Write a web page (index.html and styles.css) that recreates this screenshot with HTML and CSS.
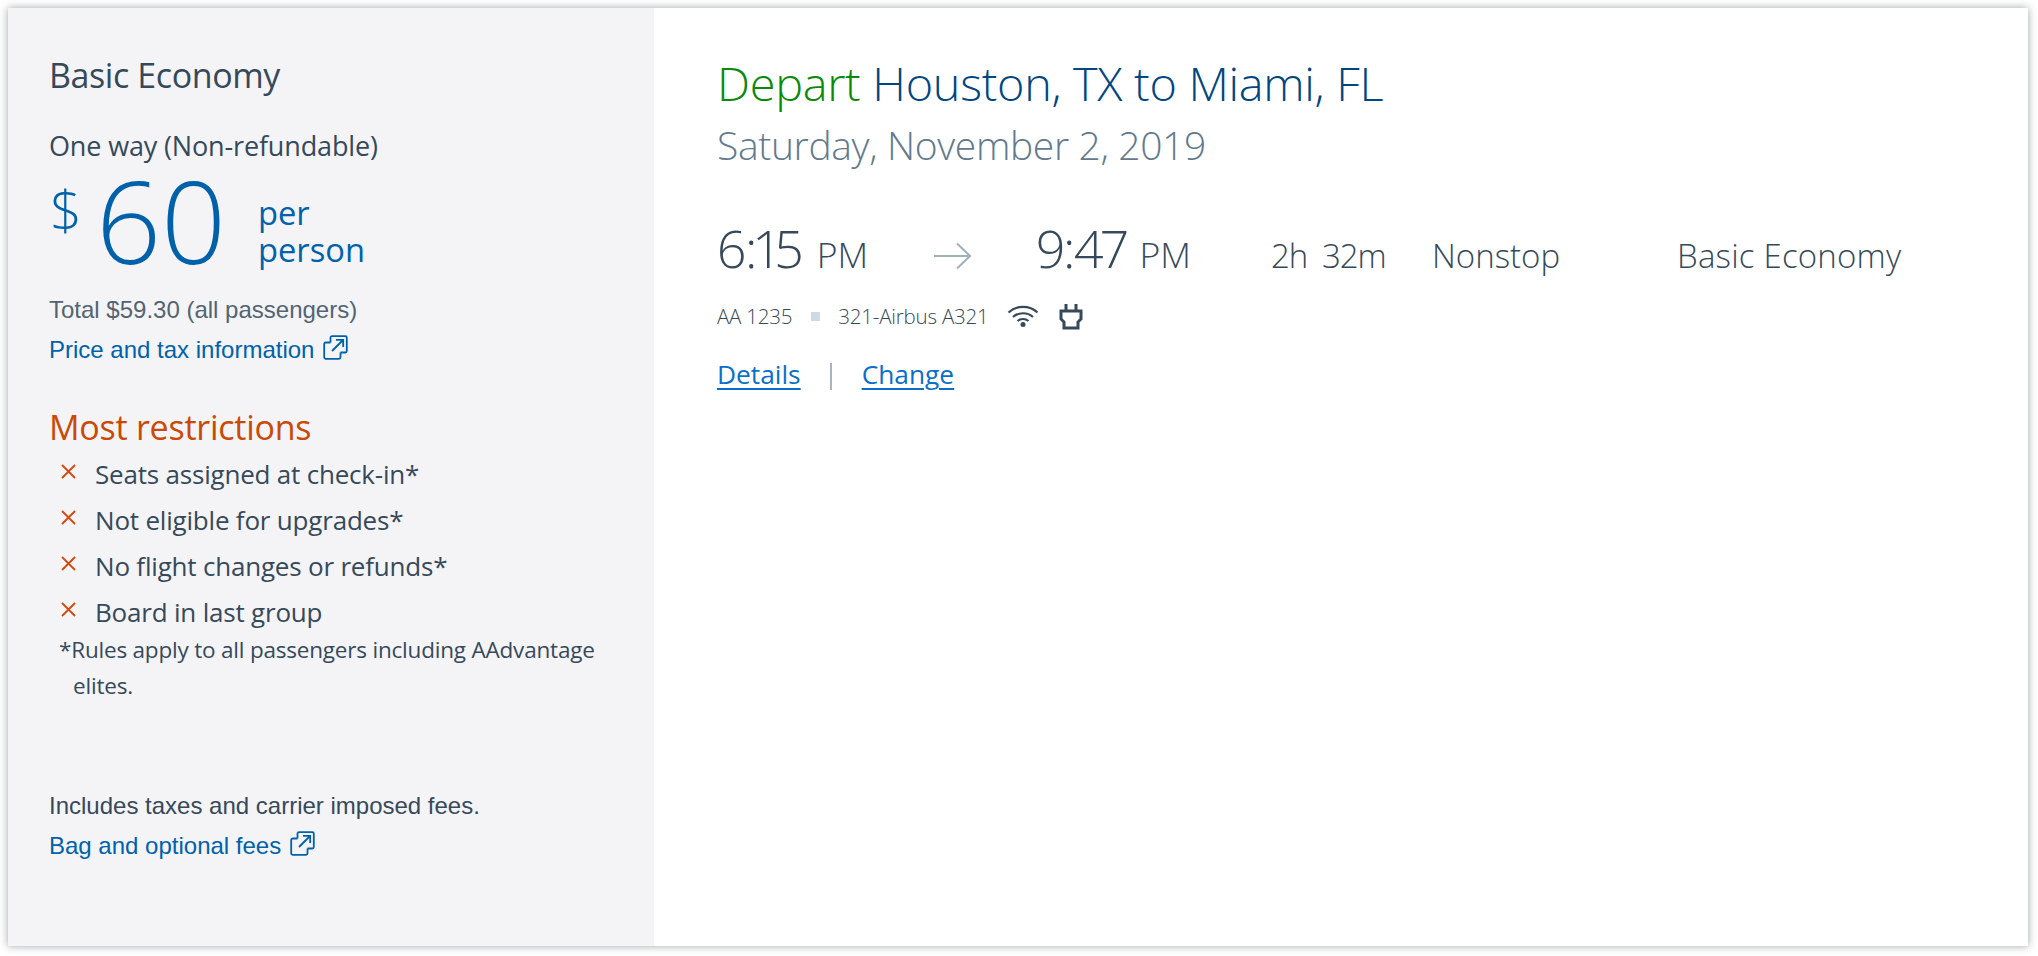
FILE: index.html
```html
<!DOCTYPE html>
<html lang="en">
<head>
<meta charset="utf-8">
<title>Basic Economy</title>
<link rel="stylesheet" href="styles.css">
</head>
<body>
<main class="card">
  <aside class="fare">
    <h2 class="fare-name">Basic Economy</h2>
    <p class="fare-type">One way (Non-refundable)</p>
    <div class="price">
      <span class="currency">$</span>
      <span class="amount">60</span>
      <span class="per">per<br>person</span>
    </div>
    <p class="total">Total $59.30 (all passengers)</p>
    <a class="ext-link" href="#">Price and tax information
      <svg class="ext-icon" viewBox="0 0 25 25" aria-hidden="true"><path d="M9 1.2h13.3a1.5 1.5 0 0 1 1.5 1.5V16a1.5 1.5 0 0 1-1.5 1.5H17.500M9 1.200a1.500 1.500 0 0 0-1.500 1.500V7.500M7.500 7.500H2.700a1.500 1.500 0 0 0-1.500 1.500v13.300a1.500 1.500 0 0 0 1.500 1.500H16a1.500 1.500 0 0 0 1.500-1.500V17.500M9 16 20 5M13 4.800h7.200V12"/></svg>
    </a>
    <h3 class="restrict-title">Most restrictions</h3>
    <ul class="restrict-list">
      <li><svg class="x" viewBox="0 0 15 15" aria-hidden="true"><path d="M1 1l13 13M14 1 1 14"/></svg>Seats assigned at check-in*</li>
      <li><svg class="x" viewBox="0 0 15 15" aria-hidden="true"><path d="M1 1l13 13M14 1 1 14"/></svg>Not eligible for upgrades*</li>
      <li><svg class="x" viewBox="0 0 15 15" aria-hidden="true"><path d="M1 1l13 13M14 1 1 14"/></svg>No flight changes or refunds*</li>
      <li><svg class="x" viewBox="0 0 15 15" aria-hidden="true"><path d="M1 1l13 13M14 1 1 14"/></svg>Board in last group</li>
    </ul>
    <p class="rules">*Rules apply to all passengers including AAdvantage elites.</p>
    <p class="includes">Includes taxes and carrier imposed fees.</p>
    <a class="ext-link" href="#">Bag and optional fees
      <svg class="ext-icon" viewBox="0 0 25 25" aria-hidden="true"><path d="M9 1.2h13.3a1.5 1.5 0 0 1 1.5 1.5V16a1.5 1.5 0 0 1-1.5 1.5H17.500M9 1.200a1.500 1.500 0 0 0-1.500 1.500V7.500M7.500 7.500H2.700a1.500 1.500 0 0 0-1.500 1.500v13.300a1.500 1.500 0 0 0 1.500 1.500H16a1.500 1.500 0 0 0 1.500-1.500V17.500M9 16 20 5M13 4.800h7.200V12"/></svg>
    </a>
  </aside>
  <section class="flight">
    <h1 class="route"><span class="depart">Depart</span> Houston, TX to Miami, FL</h1>
    <p class="date">Saturday, November 2, 2019</p>
    <div class="times">
      <span class="time time-dep"><b>6:15</b><small>PM</small></span>
      <svg class="arrow" viewBox="0 0 38 28" aria-hidden="true"><path d="M0 14h36M23 1.500 36 14 23 26.500"/></svg>
      <span class="time time-arr"><b>9:47</b><small>PM</small></span>
      <span class="duration">2h&nbsp; 32m</span>
      <span class="stops">Nonstop</span>
      <span class="cabin">Basic Economy</span>
    </div>
    <div class="meta">
      <span>AA 1235</span>
      <i class="dot"></i>
      <span>321-Airbus A321</span>
      <svg class="wifi" viewBox="0 0 32 22" aria-hidden="true"><path d="M1.500 7.500C9.500 0 22.500 0 30.500 7.500M6 12c5.500-5 14.500-5 20 0M10.500 16c3-2.700 8-2.700 11 0"/><circle cx="16" cy="19.500" r="2.500"/></svg>
      <svg class="plug" viewBox="0 0 24 27" aria-hidden="true"><path d="M7 1v7M17 1v7M2 8h20v8l-3 3v6H5v-6l-3-3z"/></svg>
    </div>
    <div class="actions">
      <a href="#">Details</a>
      <i class="pipe"></i>
      <a href="#">Change</a>
    </div>
  </section>
</main>
</body>
</html>
```
FILE: styles.css
```css
* { box-sizing: border-box; }
html, body { height: 100%; }
body {
  margin: 0;
  padding: 8px 10px 10px 8px;
  background: #fff;
  font-family: "Open Sans", "Noto Sans", sans-serif;
  color: #36495a;
}
h1, h2, h3, p, ul { margin: 0; padding: 0; font-weight: 400; }
a { text-decoration: none; }
.card {
  display: flex;
  height: 938px;
  background: #fff;
  box-shadow: 0 0 8px rgba(40, 50, 60, .45);
}
.fare {
  width: 646px;
  flex: none;
  background: #f4f4f7;
  padding: 45px 0 0 41px;
}
.fare-name { font-size: 34px; line-height: 44px; letter-spacing: -.4px; }
.fare-type { font-size: 27px; line-height: 36px; margin-top: 31px; letter-spacing: -.15px; }
.price { display: flex; align-items: flex-start; color: #0061ab; height: 112px; margin-top: 2px; }
.currency { font-size: 56px; line-height: 56px; font-weight: 300; width: 47px; padding-left: 1px; margin-top: 14px; }
.amount { font-size: 114px; line-height: 92px; font-weight: 300; width: 162px; margin-top: 8px; }
.per { font-size: 32.700px; line-height: 37px; margin-top: 28px; }
.total { font-family: "Liberation Sans", Arial, sans-serif; font-size: 24px; line-height: 30px; color: #526472; margin-top: 17px; }
.ext-link {
  display: flex;
  align-items: center;
  width: max-content;
  font-family: "Liberation Sans", Arial, sans-serif;
  font-size: 24px;
  line-height: 30px;
  color: #0061ab;
  margin-top: 10px;
}
.ext-icon { width: 25px; height: 25px; margin: -6px 0 0 9px; fill: none; stroke: #0061ab; stroke-width: 1.800; }
.restrict-title { font-size: 34px; line-height: 40px; color: #c94a05; margin-top: 42px; letter-spacing: -.25px; }
.restrict-list { list-style: none; margin-top: 4px; padding-left: 12px; }
.restrict-list li { display: flex; align-items: center; font-size: 26px; line-height: 46px; letter-spacing: -.2px; }
.x { width: 15px; height: 15px; margin: -6px 19px 0 0; fill: none; stroke: #d9480a; stroke-width: 1.800; flex: none; }
.rules { font-size: 22.500px; line-height: 36px; margin-top: -3px; padding-left: 24px; text-indent: -14px; letter-spacing: -.2px; width: 590px; }
.includes { font-family: "Liberation Sans", Arial, sans-serif; font-size: 24px; line-height: 30px; margin-top: 87px; }
.flight { flex: 1; padding: 0 0 0 63px; }
.route { font-size: 46.800px; line-height: 60px; font-weight: 300; color: #00467f; margin-top: 45px; letter-spacing: -.3px; }
.depart { color: #0a8a0a; }
.date { font-size: 39px; line-height: 50px; font-weight: 300; color: #627a8e; margin-top: 7px; letter-spacing: -.35px; }
.times { display: flex; align-items: baseline; margin-top: 48px; font-weight: 300; font-size: 33px; line-height: 60px; }
.time b { font-size: 52px; font-weight: 300; letter-spacing: -1.400px; font-variant-numeric: proportional-nums; }
.time small { font-size: 35.500px; margin-left: 15px; }
.time-dep { width: 217px; }
.arrow { width: 38px; height: 28px; align-self: center; fill: none; stroke: #9fb0bb; stroke-width: 2; margin: 8px 64px 0 0; flex: none; }
.time-arr { width: 235px; }
.time-arr b { letter-spacing: -2.200px; }
.time-arr small { margin-left: 14px; }
.duration { width: 161px; letter-spacing: -1.100px; }
.stops { width: 245px; }
.cabin { letter-spacing: .2px; }
.meta { display: flex; align-items: center; margin-top: 15px; font-size: 20.500px; line-height: 30px; font-weight: 300; letter-spacing: -.2px; }
.dot { width: 9px; height: 9px; background: #d0dae2; margin: 0 18px 0 19px; }
.wifi { width: 32px; height: 22px; margin: -1px 0 0 18px; fill: none; stroke: #36495a; stroke-width: 2.200; }
.wifi circle { fill: #36495a; stroke: none; }
.plug { width: 24px; height: 27px; margin: 0 0 0 20px; fill: none; stroke: #36495a; stroke-width: 3; }
.actions { display: flex; align-items: center; margin-top: 25px; font-size: 26.300px; line-height: 36px; }
.actions a { color: #0a6fc9; text-decoration: underline; text-underline-offset: 4px; text-decoration-thickness: 2px; }
.pipe { width: 2px; height: 27px; background: #a9b5be; margin: 4px 30px 0 29px; }
```
